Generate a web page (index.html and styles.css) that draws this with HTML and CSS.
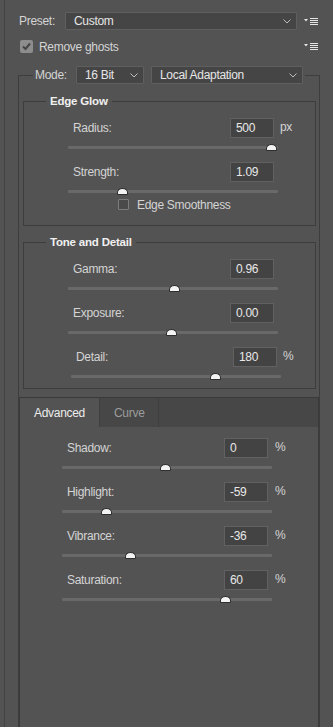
FILE: index.html
```html
<!DOCTYPE html>
<html>
<head>
<meta charset="utf-8">
<link rel="stylesheet" href="styles.css">
</head>
<body>
<div class="panel">
  <div class="top-row">
    <span class="lbl">Preset:</span>
    <div class="select sel-preset"><span>Custom</span><svg class="chev" width="8" height="5" viewBox="0 0 8 5"><polyline points="0.5,0.5 4,4 7.5,0.5" fill="none" stroke="#bdbdbd" stroke-width="1"/></svg></div>
    <svg class="menu-ico" width="14" height="7" viewBox="0 0 14 7"><polygon points="0,1 4,1 2,3.5" fill="#e6e6e6"/><rect x="6" y="0" width="8" height="1" fill="#e6e6e6"/><rect x="6" y="2" width="8" height="1" fill="#e6e6e6"/><rect x="6" y="4" width="8" height="1" fill="#e6e6e6"/><rect x="6" y="6" width="8" height="1" fill="#e6e6e6"/></svg>
  </div>
  <div class="ghost-row">
    <span class="cb cb-on"><svg width="13" height="13" viewBox="0 0 13 13"><polyline points="3,6.5 5.5,9 10,3.5" fill="none" stroke="#454545" stroke-width="2"/></svg></span>
    <span class="ghost-lbl">Remove ghosts</span>
    <svg class="menu-ico" width="14" height="7" viewBox="0 0 14 7"><polygon points="0,1 4,1 2,3.5" fill="#e6e6e6"/><rect x="6" y="0" width="8" height="1" fill="#e6e6e6"/><rect x="6" y="2" width="8" height="1" fill="#e6e6e6"/><rect x="6" y="4" width="8" height="1" fill="#e6e6e6"/><rect x="6" y="6" width="8" height="1" fill="#e6e6e6"/></svg>
  </div>

  <fieldset class="mode">
    <legend class="mode-legend">
      <div class="mode-inner">
        <span class="mode-lbl">Mode:</span>
        <div class="select sel-bit"><span>16 Bit</span><svg class="chev" width="8" height="5" viewBox="0 0 8 5"><polyline points="0.5,0.5 4,4 7.5,0.5" fill="none" stroke="#bdbdbd" stroke-width="1"/></svg></div>
        <div class="select sel-method"><span>Local Adaptation</span><svg class="chev" width="8" height="5" viewBox="0 0 8 5"><polyline points="0.5,0.5 4,4 7.5,0.5" fill="none" stroke="#bdbdbd" stroke-width="1"/></svg></div>
      </div>
    </legend>

    <fieldset class="group group-edge">
      <legend class="group-title">Edge Glow</legend>
      <div class="group-body">
        <div class="ctl">
          <div class="ctl-row"><span class="lbl">Radius:</span><span class="num">500</span><span class="unit">px</span></div>
          <div class="slider"><span class="thumb" style="left:97%"></span></div>
        </div>
        <div class="ctl">
          <div class="ctl-row"><span class="lbl">Strength:</span><span class="num">1.09</span><span class="unit"></span></div>
          <div class="slider"><span class="thumb" style="left:26%"></span></div>
        </div>
        <div class="smooth-row">
          <span class="cb cb-off"></span>
          <span>Edge Smoothness</span>
        </div>
      </div>
    </fieldset>

    <fieldset class="group group-tone">
      <legend class="group-title">Tone and Detail</legend>
      <div class="group-body tone-body">
        <div class="ctl">
          <div class="ctl-row"><span class="lbl">Gamma:</span><span class="num">0.96</span><span class="unit"></span></div>
          <div class="slider"><span class="thumb" style="left:50.5%"></span></div>
        </div>
        <div class="ctl">
          <div class="ctl-row"><span class="lbl">Exposure:</span><span class="num">0.00</span><span class="unit"></span></div>
          <div class="slider"><span class="thumb" style="left:49.5%"></span></div>
        </div>
        <div class="ctl ctl-shift">
          <div class="ctl-row"><span class="lbl">Detail:</span><span class="num">180</span><span class="unit">%</span></div>
          <div class="slider"><span class="thumb" style="left:68.6%"></span></div>
        </div>
      </div>
    </fieldset>

    <div class="tabs">
      <div class="tab-strip">
        <div class="tab tab-active">Advanced</div>
        <div class="tab tab-curve">Curve</div>
      </div>
      <div class="tab-body">
        <div class="ctl ctl-adv">
          <div class="ctl-row"><span class="lbl">Shadow:</span><span class="num">0</span><span class="unit">%</span></div>
          <div class="slider"><span class="thumb" style="left:49.5%"></span></div>
        </div>
        <div class="ctl ctl-adv">
          <div class="ctl-row"><span class="lbl">Highlight:</span><span class="num">-59</span><span class="unit">%</span></div>
          <div class="slider"><span class="thumb" style="left:21.4%"></span></div>
        </div>
        <div class="ctl ctl-adv">
          <div class="ctl-row"><span class="lbl">Vibrance:</span><span class="num">-36</span><span class="unit">%</span></div>
          <div class="slider"><span class="thumb" style="left:32.4%"></span></div>
        </div>
        <div class="ctl ctl-adv">
          <div class="ctl-row"><span class="lbl">Saturation:</span><span class="num">60</span><span class="unit">%</span></div>
          <div class="slider"><span class="thumb" style="left:78%"></span></div>
        </div>
      </div>
    </div>
  </fieldset>
</div>
</body>
</html>
```
FILE: styles.css
```css
* { box-sizing: border-box; }
html, body { margin: 0; padding: 0; }
body {
  width: 333px;
  height: 727px;
  overflow: hidden;
  background: #535353;
  font-family: "Liberation Sans", Arial, sans-serif;
  font-size: 12px;
  letter-spacing: -0.3px;
  color: #d4d4d4;
}
.panel {
  margin-left: 4px;
  border-left: 1px solid #434343;
  height: 727px;
  padding-top: 12px;
  overflow: hidden;
}
.top-row {
  display: flex;
  align-items: center;
  height: 18px;
  padding: 0 15px 0 14px;
}
.top-row .lbl { width: 46px; }
.menu-ico { margin-left: auto; display: block; }
.select {
  display: flex;
  align-items: center;
  height: 18px;
  background: #454545;
  border: 1px solid #5f5f5f;
  border-radius: 1px;
  padding: 0 5px 0 8px;
  color: #e6e6e6;
  white-space: nowrap;
}
.select .chev { margin-left: auto; display: block; margin-top: 1px; }
.sel-preset { width: 232px; }
.sel-bit { width: 68px; }
.sel-method { width: 152px; margin-left: 7px; }

.ghost-row {
  display: flex;
  align-items: center;
  height: 13px;
  margin-top: 10px;
  padding: 0 15px 0 15px;
}
.cb { display: block; flex: none; }
.cb-on {
  width: 13px;
  height: 13px;
  background: #8d8d8d;
  border-radius: 2px;
}
.cb-on svg { display: block; }
.ghost-lbl { margin-left: 6px; }

.mode {
  margin: 13px 13px 0 13px;
  padding: 0;
  border: 1px solid #3d3d3d;
  min-width: 0;
}
.mode-legend {
  margin-left: 14px;
  padding: 0 2px;
}
.mode-inner {
  display: flex;
  align-items: center;
  height: 18px;
}
.mode-lbl { width: 41px; }

.group {
  margin: 10px 3px 0 4px;
  padding: 0;
  border: 1px solid #3d3d3d;
  min-width: 0;
}
.group-tone { margin-top: 9px; }
.group-title {
  margin-left: 22px;
  padding: 0 4px;
  font-weight: bold;
  color: #f0f0f0;
  line-height: 14px;
  font-size: 11.5px;
  letter-spacing: -0.2px;
}
.group-body { padding: 10px 0 15px 44px; }
.tone-body { padding-bottom: 10px; }

.ctl { width: 232px; }
.ctl + .ctl { margin-top: 13px; }
.ctl-shift { margin-left: 3px; }
.ctl-row {
  display: flex;
  align-items: center;
  height: 20px;
}
.ctl-row .lbl { flex: 1; padding-left: 5px; }
.num {
  width: 44px;
  height: 20px;
  display: flex;
  align-items: center;
  padding-left: 5px;
  background: #434343;
  border: 1px solid #616161;
  color: #e8e8e8;
}
.unit { width: 26px; padding-left: 6px; margin-top: -2px; }
.ctl-adv .unit { padding-left: 7px; }
.slider {
  position: relative;
  width: 210px;
  height: 3px;
  margin-top: 8px;
  background: #696969;
  border-radius: 1px;
}
.thumb {
  position: absolute;
  top: -2px;
  width: 11px;
  height: 7px;
  margin-left: -5.5px;
  background: #f3f3f3;
  border: 1px solid #2e2e2e;
  border-radius: 6px 6px 1px 1px / 5px 5px 1px 1px;
}

.smooth-row {
  display: flex;
  align-items: center;
  height: 11px;
  margin-top: 6px;
  padding-left: 50px;
}
.cb-off {
  width: 11px;
  height: 11px;
  background: #4a4a4a;
  border: 1px solid #7c7c7c;
  border-radius: 1px;
  margin-right: 8px;
}

.tabs {
  margin-top: 8px;
  border: 1px solid #3a3a3a;
  border-bottom: none;
}
.tab-strip {
  display: flex;
  height: 29px;
  background: #474747;
}
.tab {
  display: flex;
  align-items: center;
  height: 29px;
  padding-left: 14px;
  border-right: 1px solid #3e3e3e;
}
.tab-active { width: 80px; background: #535353; color: #ececec; }
.tab-curve { width: 59px; color: #9c9c9c; }
.tab-body {
  padding: 11px 0 0 42px;
  height: 420px;
}
```
